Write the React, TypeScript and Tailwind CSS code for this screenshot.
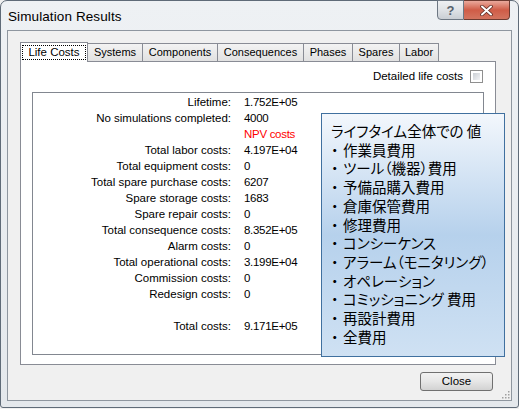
import React from 'react';

const rows: { label: string; value: string; red?: boolean }[] = [
  { label: 'Lifetime:', value: '1.752E+05' },
  { label: 'No simulations completed:', value: '4000' },
  { label: '', value: 'NPV costs', red: true },
  { label: 'Total labor costs:', value: '4.197E+04' },
  { label: 'Total equipment costs:', value: '0' },
  { label: 'Total spare purchase costs:', value: '6207' },
  { label: 'Spare storage costs:', value: '1683' },
  { label: 'Spare repair costs:', value: '0' },
  { label: 'Total consequence costs:', value: '8.352E+05' },
  { label: 'Alarm costs:', value: '0' },
  { label: 'Total operational costs:', value: '3.199E+04' },
  { label: 'Commission costs:', value: '0' },
  { label: 'Redesign costs:', value: '0' },
  { label: '', value: '' },
  { label: 'Total costs:', value: '9.171E+05' },
];

const tabs: { name: string; w: string }[] = [
  { name: 'Systems', w: 'w-[55px]' },
  { name: 'Components', w: 'w-[75px]' },
  { name: 'Consequences', w: 'w-[86px]' },
  { name: 'Phases', w: 'w-[49px]' },
  { name: 'Spares', w: 'w-[47px]' },
  { name: 'Labor', w: 'w-[39px]' },
];

const notes = [
  '作業員費用',
  'ツール（機器）費用',
  '予備品購入費用',
  '倉庫保管費用',
  '修理費用',
  'コンシーケンス',
  'アラーム（モニタリング）',
  'オペレーション',
  'コミッショニング 費用',
  '再設計費用',
  '全費用',
];

const App: React.FC = () => {
  return (
    <div className="relative w-[519px] h-[409px] overflow-hidden bg-[#f0f0f0]">
      <div className="relative flex flex-col w-[519px] h-[408px] rounded-t-[7px] rounded-b-[3px] border border-[#5f6b78] bg-gradient-to-b from-[#eef1f4] to-[#e4e8ec] font-['Liberation_Sans',sans-serif]">
        {/* title bar */}
        <div className="flex h-[29px] items-start justify-between">
          <div className="pl-[7px] pt-[6px] text-[13.5px] text-[#000] tracking-[0.1px]">Simulation Results</div>
          <div className="flex mr-[8px] -mt-px">
            <div className="flex w-[27px] h-[20px] items-center justify-center rounded-bl-[4px] border border-[#6d7783] bg-gradient-to-b from-[#eef0f2] via-[#dfe2e6] to-[#c9ced4]">
              <span className="text-[13px] font-bold text-[#55606c] leading-none">?</span>
            </div>
            <div className="flex w-[46px] h-[20px] items-center justify-center rounded-br-[4px] border border-l-0 border-[#6d3a30] bg-gradient-to-b from-[#e9a99c] via-[#cf5c47] to-[#d3745f]">
              <svg width="13" height="11" viewBox="0 0 13 11">
                <path d="M2 1.5 L11 9.5 M11 1.5 L2 9.5" stroke="#5a2a22" strokeWidth="3.6" strokeLinecap="round" />
                <path d="M2 1.5 L11 9.5 M11 1.5 L2 9.5" stroke="#ffffff" strokeWidth="2" strokeLinecap="round" />
              </svg>
            </div>
          </div>
        </div>

        {/* client area */}
        <div className="relative mx-[6px] h-[371px] border border-[#8e969f] bg-[#f0f0f0] font-['Liberation_Sans',sans-serif] text-[11.5px] text-black">
          <div className="pl-[12px] pr-[15px] pt-[11px]">
            {/* tab strip */}
            <div className="flex items-end h-[19px]">
              <div className="relative z-10 flex h-[20px] w-[68px] items-start justify-center border border-b-0 border-[#898c95] bg-white pt-[2px] -mb-px">
                <span className="border border-dotted border-black px-[5px] leading-[13px]">Life Costs</span>
              </div>
              {tabs.map((t) => (
                <div
                  key={t.name}
                  className={`flex h-[18px] ${t.w} items-center justify-center border border-l-0 border-b-0 border-[#898c95] bg-gradient-to-b from-[#f3f3f3] to-[#e1e1e1] text-[11px] leading-none`}
                >
                  {t.name}
                </div>
              ))}
            </div>
            {/* tab panel */}
            <div className="flex h-[304px] flex-col border border-[#898c95] bg-white px-[11px] pt-[7px]">
              <div className="flex items-center justify-end gap-[7px] pr-[1px] h-[15px]">
                <span>Detailed life costs</span>
                <div className="w-[13px] h-[13px] border border-[#8f8f8f] bg-white p-[2px]">
                  <div className="w-full h-full bg-gradient-to-br from-[#cbcfd5] to-[#f3f4f6]" />
                </div>
              </div>
              <div className="mt-[8px] h-[263px] border border-[#828790] bg-white pt-[2px]">
                {rows.map((r, i) => (
                  <div key={i} className="flex h-[16px] items-center">
                    <div className="w-[198px] text-right whitespace-nowrap">{r.label}</div>
                    <div className={`ml-[13px] whitespace-nowrap tracking-[-0.3px] ${r.red ? 'text-[#ff0000]' : ''}`}>{r.value}</div>
                  </div>
                ))}
              </div>
            </div>
          </div>
          {/* bottom buttons */}
          <div className="flex justify-end pr-[18px] pt-[7px]">
            <button className="flex w-[73px] h-[19px] items-center justify-center rounded-[3px] border border-[#707070] bg-gradient-to-b from-[#f2f2f2] via-[#e6e6e6] to-[#d2d2d2] text-[11.5px] leading-none">
              Close
            </button>
          </div>
          {/* size grip */}
          <svg className="absolute right-[1px] bottom-[1px]" width="10" height="10" viewBox="0 0 10 10">
            {[
              [8, 2],
              [5, 5],
              [8, 5],
              [2, 8],
              [5, 8],
              [8, 8],
            ].map(([x, y], i) => (
              <rect key={i} x={x} y={y} width="1.5" height="1.5" fill="#a0a0a0" />
            ))}
          </svg>
        </div>
      </div>

      {/* callout note */}
      <div className="absolute left-[321px] top-[113px] w-[184px] h-[244px] border border-[#40709f] bg-gradient-to-b from-[#f3f7fc] via-[#b6d1ec] to-[#cfe1f3] pl-[9px] pt-[8px] font-['Noto_Sans_CJK_JP',sans-serif] text-[14.5px] leading-[18.7px] text-black [font-feature-settings:'palt']">
        <div className="whitespace-nowrap">ライフタイム全体での 値</div>
        {notes.map((n, i) => (
          <div key={i} className="flex whitespace-nowrap">
            <span className="inline-block w-[12px]">・</span>
            <span>{n}</span>
          </div>
        ))}
      </div>
    </div>
  );
};

export default App;
